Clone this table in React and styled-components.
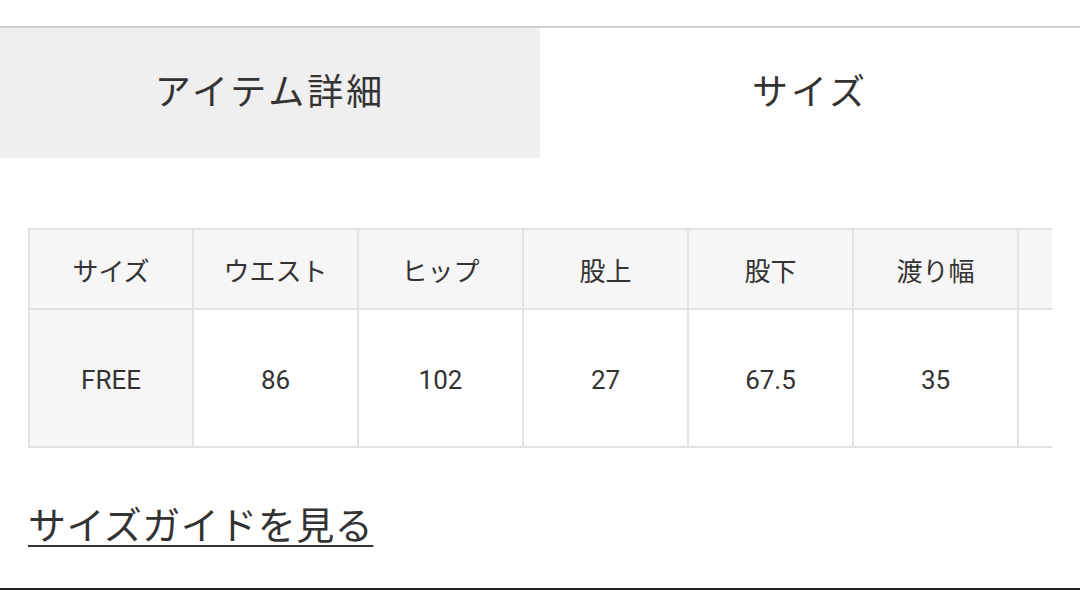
import React from "react";
import styled, { createGlobalStyle } from "styled-components";

const Global = createGlobalStyle`
  html, body { margin: 0; padding: 0; background: #fff; }
  body { font-family: Roboto, "Noto Sans CJK JP", "Noto Sans", sans-serif; color: #333; }
  * { box-sizing: border-box; }
`;

const Page = styled.div`
  width: 1080px;
  height: 590px;
  overflow: hidden;
  display: flex;
  flex-direction: column;
  padding-top: 26px;
  border-bottom: 2px solid #222;
`;

const Tabs = styled.div`
  display: flex;
  border-top: 2px solid #cfcfcf;
`;

const Tab = styled.div`
  flex: 1;
  height: 130px;
  padding-bottom: 8px;
  display: flex;
  align-items: center;
  justify-content: center;
  font-family: "Noto Sans CJK JP", sans-serif;
  font-size: 36px;
  letter-spacing: 3px;
  color: #333;
  background: ${(p) => (p.$active ? "#fff" : "#efefef")};
`;

const TableWrap = styled.div`
  margin: 70px 28px 0;
  overflow: hidden;
`;

const Table = styled.table`
  border-collapse: separate;
  border-spacing: 0;
  table-layout: fixed;
  width: 1156px;
  border-top: 2px solid #e2e2e2;
  border-left: 2px solid #e2e2e2;
`;

const Cell = styled.td`
  width: ${(p) => (p.$first ? "164px" : "165px")};
  padding: 0;
  text-align: center;
  vertical-align: middle;
  border-right: 2px solid #e2e2e2;
  border-bottom: 2px solid #e2e2e2;
  font-size: 26px;
  color: #333;
  padding-top: ${(p) => (p.$head ? "0" : "3px")};
  height: ${(p) => (p.$head ? "80px" : "138px")};
  background: ${(p) => (p.$shaded ? "#f6f6f6" : "#fff")};
`;

const LinkRow = styled.div`
  margin: 48px 28px 0;
`;

const GuideLink = styled.a`
  font-family: "Noto Sans CJK JP", sans-serif;
  font-size: 38px;
  line-height: 53px;
  letter-spacing: 0.5px;
  color: #333;
  text-decoration: underline;
  text-decoration-thickness: 2px;
  text-underline-offset: 6px;
  cursor: pointer;
`;

const heads = ["サイズ", "ウエスト", "ヒップ", "股上", "股下", "渡り幅", ""];
const values = ["FREE", "86", "102", "27", "67.5", "35", ""];

export default function App() {
  return (
    <>
      <Global />
      <Page>
        <Tabs>
          <Tab>アイテム詳細</Tab>
          <Tab $active>サイズ</Tab>
        </Tabs>
        <TableWrap>
          <Table>
            <tbody>
              <tr>
                {heads.map((h, i) => (
                  <Cell key={i} $head $shaded $first={i === 0}>
                    {h}
                  </Cell>
                ))}
              </tr>
              <tr>
                {values.map((v, i) => (
                  <Cell key={i} $shaded={i === 0} $first={i === 0}>
                    {v}
                  </Cell>
                ))}
              </tr>
            </tbody>
          </Table>
        </TableWrap>
        <LinkRow>
          <GuideLink>サイズガイドを見る</GuideLink>
        </LinkRow>
      </Page>
    </>
  );
}
